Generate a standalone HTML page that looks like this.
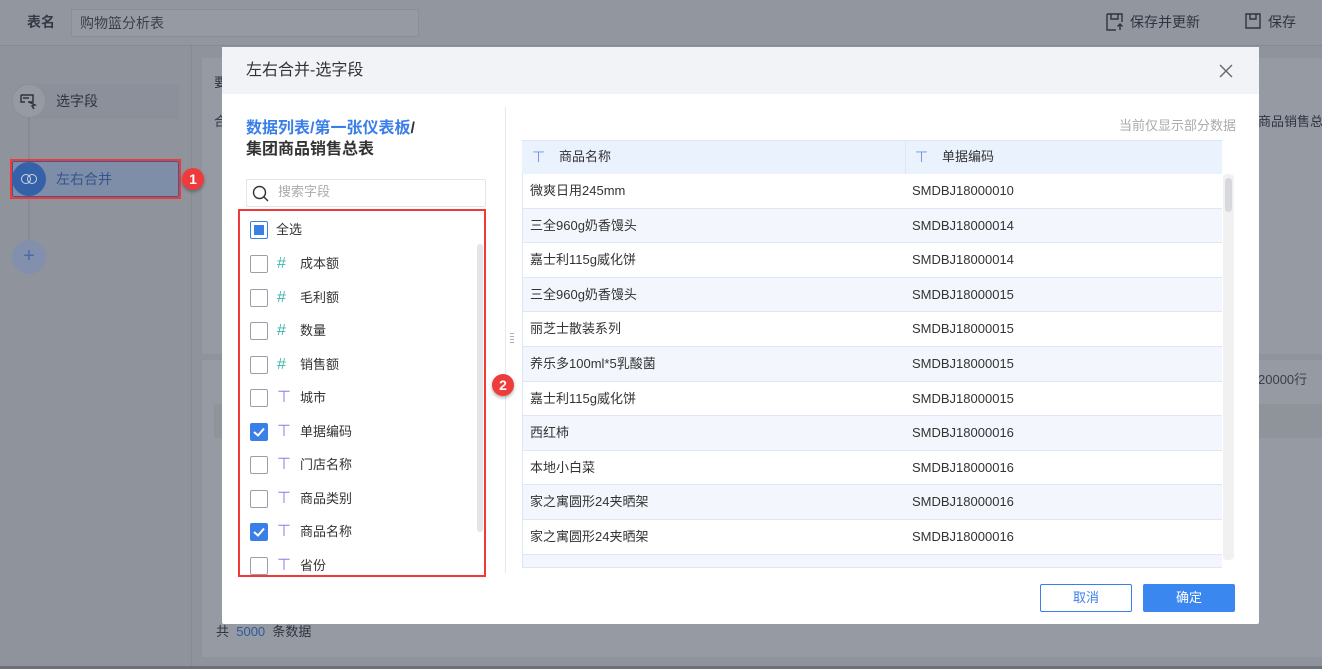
<!DOCTYPE html>
<html><head><meta charset="utf-8"><style>
*{box-sizing:border-box;margin:0;padding:0}
body{width:1322px;height:669px;overflow:hidden;background:#8f939c;font-family:"Liberation Sans","Noto Sans CJK SC",sans-serif;font-size:13px;color:#333;position:relative;line-height:16px}
.abs{position:absolute;white-space:nowrap}
</style></head><body>
<div class="abs" style="left:0;top:0;width:1322px;height:46px;background:#92969f;border-bottom:1px solid #858992"></div>
<div class="abs" style="left:27px;top:14px;font-size:14px;font-weight:bold;color:#333a45">表名</div>
<div class="abs" style="left:71px;top:9px;width:348px;height:28px;border:1px solid #8a8e97;background:#959aa3;padding:5px 8px;font-size:14px;color:#3a404a">购物篮分析表</div>
<svg class="abs" style="left:1106px;top:13px" width="18" height="18"><path d="M1 1H16V9M1 1V17H10M5 1V6H12V1" stroke="#2f3540" stroke-width="1.4" fill="none"/><path d="M14 17V11M11.5 13.5L14 11L16.5 13.5" stroke="#2f3540" stroke-width="1.4" fill="none"/></svg>
<div class="abs" style="left:1130px;top:14px;font-size:14px;color:#2f3540">保存并更新</div>
<svg class="abs" style="left:1245px;top:13px" width="16" height="16"><path d="M1 1H15V15H1Z M5 1V6H11V1" stroke="#2f3540" stroke-width="1.4" fill="none"/></svg>
<div class="abs" style="left:1268px;top:14px;font-size:14px;color:#2f3540">保存</div>
<div class="abs" style="left:191px;top:46px;width:1px;height:623px;background:#868a93"></div>
<div class="abs" style="left:202px;top:58px;width:1120px;height:296px;background:#959aa3"></div>
<div class="abs" style="left:202px;top:360px;width:1120px;height:297px;background:#959aa3"></div>
<div class="abs" style="left:214px;top:404px;width:1108px;height:34px;background:#8e949a"></div>
<div class="abs" style="left:1258px;top:372px;font-size:13px;color:#3a404a">20000行</div>
<div class="abs" style="left:1258px;top:114px;font-size:13px;color:#2f3540">商品销售总</div>
<div class="abs" style="left:214px;top:75px;color:#2f3540">要</div>
<div class="abs" style="left:214px;top:114px;color:#2f3540">合</div>
<div class="abs" style="left:216px;top:624px;font-size:13px;color:#2f3540">共 &nbsp;<span style="color:#2f5a9a">5000</span>&nbsp; 条数据</div>
<div class="abs" style="left:0;top:666px;width:1322px;height:3px;background:#6c7078"></div>
<div class="abs" style="left:28px;top:110px;width:2px;height:150px;background:#868a93"></div>
<div class="abs" style="left:30px;top:84px;width:149px;height:35px;background:#8b909b;border-radius:3px"></div>
<div class="abs" style="left:12px;top:84px;width:34px;height:34px;border-radius:50%;background:#959aa3;border:1px solid #8b8f98"></div>
<svg class="abs" style="left:20px;top:94px" width="18" height="16"><path d="M1 1H13V8H8M1 1V8H5M3 4H9" stroke="#2f3540" stroke-width="1.5" fill="none"/><path d="M9 8L15 11L12 12L14 15" stroke="#2f3540" stroke-width="1.5" fill="none"/></svg>
<div class="abs" style="left:56px;top:93px;font-size:14px;color:#2f3540">选字段</div>
<div class="abs" style="left:10px;top:159px;width:171px;height:40px;border:2px solid #f03a3a"></div>
<div class="abs" style="left:12px;top:161px;width:167px;height:36px;background:#7f8ea8;border:1px solid #3a5a9a;border-radius:2px"></div>
<div class="abs" style="left:12px;top:162px;width:34px;height:34px;border-radius:50%;background:#3461a8"></div>
<div class="abs" style="left:21px;top:174px;width:10px;height:10px;border-radius:50%;border:1.5px solid #cfd6e4"></div>
<div class="abs" style="left:27px;top:174px;width:10px;height:10px;border-radius:50%;border:1.5px solid #cfd6e4"></div>
<div class="abs" style="left:56px;top:171px;font-size:14px;color:#34548e">左右合并</div>
<div class="abs" style="left:182px;top:168px;width:22px;height:22px;border-radius:50%;background:#ee3b3b;color:#fff;font-weight:bold;font-size:14px;text-align:center;line-height:22px;box-shadow:0 2px 3px rgba(0,0,0,.3)">1</div>
<div class="abs" style="left:12px;top:240px;width:34px;height:34px;border-radius:50%;background:#8290ad;color:#4a6aa8;font-size:20px;text-align:center;line-height:32px">+</div>

<div class="abs" style="left:222px;top:47px;width:1037px;height:577px;background:#fff;border-radius:2px">
 <div style="height:47px;background:#f2f3f7;padding:15px 24px;font-size:16px;color:#333;line-height:18px">左右合并-选字段</div>
 <svg class="abs" style="left:997px;top:17px" width="14" height="14"><path d="M1 1L13 13M13 1L1 13" stroke="#666" stroke-width="1.4"/></svg>
 <div class="abs" style="left:283px;top:60px;width:1px;height:466px;background:#e6e8ec"></div>
 <div class="abs" style="left:288px;top:286px;width:4px;height:12px;background:repeating-linear-gradient(#aab 0 1px,transparent 1px 3px)"></div>
 <div class="abs" style="left:24px;top:71px;font-size:16px;font-weight:bold;line-height:21px;color:#333"><span style="color:#3a7fe8">数据列表/第一张仪表板</span>/<br>集团商品销售总表</div>
 <div class="abs" style="left:24px;top:132px;width:240px;height:28px;border:1px solid #e2e4e8;border-radius:2px"></div>
 <svg class="abs" style="left:30px;top:138px" width="18" height="18"><circle cx="7.5" cy="7.5" r="6" fill="none" stroke="#333" stroke-width="1.4"/><path d="M12 12L16 16" stroke="#333" stroke-width="1.4"/></svg>
 <div class="abs" style="left:56px;top:137px;color:#aaa">搜索字段</div>
 <div class="abs" style="left:16px;top:162px;width:248px;height:368px;border:2px solid #f03a3a"></div>
 <div class="abs" style="left:255px;top:197px;width:6px;height:288px;background:#e4e5e8;border-radius:3px"></div>
 <div class="abs" style="left:270px;top:327px;width:22px;height:22px;border-radius:50%;background:#ee3b3b;color:#fff;font-weight:bold;font-size:14px;text-align:center;line-height:22px;box-shadow:0 2px 3px rgba(0,0,0,.3)">2</div>
 <div class="abs" style="left:28px;top:174px;width:18px;height:18px;border:1px solid #3a7fe8;border-radius:2px"><div style="margin:3px;width:10px;height:10px;background:#3a7fe8"></div></div>
 <div class="abs" style="left:54px;top:175px;color:#333">全选</div>
 <div id="list"></div>
 <div class="abs" style="right:23px;top:71px;color:#aaa">当前仅显示部分数据</div>
 <div class="abs" style="left:300px;top:93px;width:700px;height:34px;background:#eaf2fd;border-top:1px solid #dde7f5"></div>
 <div class="abs" style="left:310px;top:103px;color:#6e8ef0;font-size:15px">⊤</div>
 <div class="abs" style="left:337px;top:102px;color:#333">商品名称</div>
 <div class="abs" style="left:683px;top:93px;width:1px;height:420px;background:#dde7f5"></div>
 <div class="abs" style="left:693px;top:103px;color:#6e8ef0;font-size:15px">⊤</div>
 <div class="abs" style="left:720px;top:102px;color:#333">单据编码</div>
 <div id="rows"></div>
 <div class="abs" style="left:1001px;top:127px;width:11px;height:386px;background:#f1f1f2;border-radius:4px"></div>
 <div class="abs" style="left:1003px;top:131px;width:7px;height:34px;background:#d8d9dc;border-radius:4px"></div>
 <div class="abs" style="left:818px;top:537px;width:92px;height:28px;border:1px solid #3a7fe8;border-radius:2px;text-align:center;line-height:26px;color:#3a7fe8">取消</div>
 <div class="abs" style="left:921px;top:537px;width:92px;height:28px;background:#3a87f0;border-radius:2px;text-align:center;line-height:28px;color:#fff">确定</div>
</div>
<script>
var f=[["#","成本额",0],["#","毛利额",0],["#","数量",0],["#","销售额",0],["T","城市",0],["T","单据编码",1],["T","门店名称",0],["T","商品类别",0],["T","商品名称",1],["T","省份",0]];
var h="";f.forEach(function(x,i){var y=208+i*33.5;
h+='<div class="abs" style="left:28px;top:'+y+'px;width:18px;height:18px;border-radius:2px;'+(x[2]?'background:#3a7fe8':'border:1px solid #9aa0aa')+'">'+(x[2]?'<svg width="18" height="18"><path d="M4 9L8 12.5L14 5.5" stroke="#fff" stroke-width="2" fill="none"/></svg>':'')+'</div>';
h+='<div class="abs" style="left:55px;top:'+(y+1)+'px;font-size:16px;line-height:16px;color:'+(x[0]=="#"?'#3bb8a8':'#8a7ee8')+'">'+(x[0]=="#"?'#':'⊤')+'</div>';
h+='<div class="abs" style="left:78px;top:'+(y+1)+'px;color:#333">'+x[1]+'</div>';});
document.getElementById("list").outerHTML=h;
var r=[["微爽日用245mm","10"],["三全960g奶香馒头","14"],["嘉士利115g威化饼","14"],["三全960g奶香馒头","15"],["丽芝士散装系列","15"],["养乐多100ml*5乳酸菌","15"],["嘉士利115g威化饼","15"],["西红柿","16"],["本地小白菜","16"],["家之寓圆形24夹晒架","16"],["家之寓圆形24夹晒架","16"],["",""]];
h="";r.forEach(function(x,i){var y=127+i*34.6;var hh=i==11?13:34.6;
h+='<div class="abs" style="left:300px;top:'+y+'px;width:700px;height:'+hh+'px;background:'+(i%2?'#f3f7fd':'#fff')+';border-bottom:1px solid #dde7f5;border-left:1px solid #dde7f5"></div>';
if(x[0])h+='<div class="abs" style="left:308px;top:'+(y+9)+'px;color:#333">'+x[0]+'</div><div class="abs" style="left:690px;top:'+(y+9)+'px;color:#333">SMDBJ180000'+x[1]+'</div>';});
document.getElementById("rows").outerHTML=h;
</script>
</body></html>
